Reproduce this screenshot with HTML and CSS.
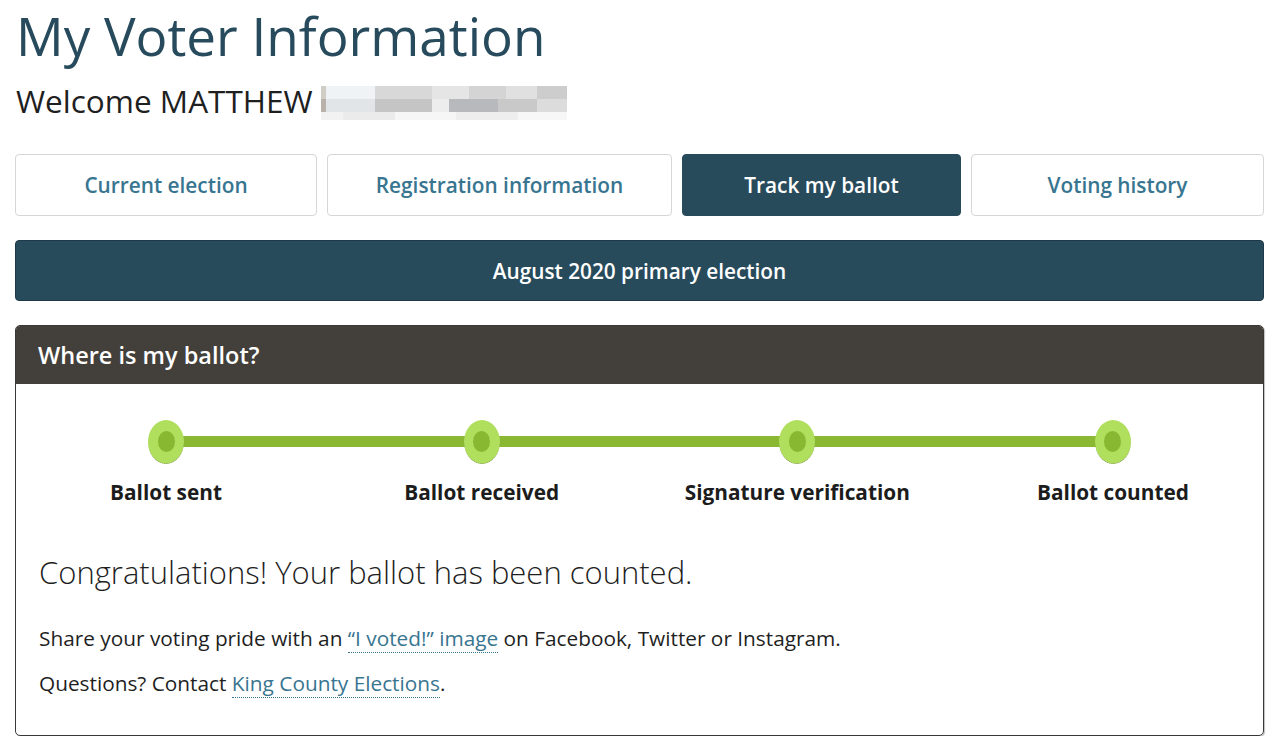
FILE: index.html
```html
<!DOCTYPE html>
<html lang="en">
<head>
<meta charset="utf-8">
<title>My Voter Information</title>
<link rel="stylesheet" href="styles.css">
</head>
<body>
<main class="page">
  <h1 class="title">My Voter Information</h1>
  <p class="welcome">Welcome MATTHEW <span class="redacted"></span></p>

  <nav class="tabs">
    <a class="tab" href="#">Current election</a>
    <a class="tab" href="#">Registration information</a>
    <a class="tab tab-active" href="#">Track my ballot</a>
    <a class="tab" href="#">Voting history</a>
  </nav>

  <div class="election">August 2020 primary election</div>

  <section class="panel">
    <h2 class="panel-head">Where is my ballot?</h2>
    <div class="panel-body">
      <ol class="steps">
        <li class="step"><span class="dot"></span><span class="step-label">Ballot sent</span></li>
        <li class="step"><span class="dot"></span><span class="step-label">Ballot received</span></li>
        <li class="step"><span class="dot"></span><span class="step-label">Signature verification</span></li>
        <li class="step"><span class="dot"></span><span class="step-label">Ballot counted</span></li>
      </ol>
      <p class="congrats">Congratulations! Your ballot has been counted.</p>
      <p class="text">Share your voting pride with an <a href="#" class="link">“I voted!” image</a> on Facebook, Twitter or Instagram.</p>
      <p class="text text-second">Questions? Contact <a href="#" class="link">King County Elections</a>.</p>
    </div>
  </section>
</main>
</body>
</html>
```

FILE: styles.css
```css
* { box-sizing: border-box; }
html, body { margin: 0; padding: 0; background: #fff; }
body {
  font-family: "Open Sans", "Noto Sans", sans-serif;
  color: #222;
}
.page {
  padding: 0 16px 0 15px;
}
.title {
  margin: 0;
  padding: 4px 0 0 1px;
  font-size: 53px;
  line-height: 64px;
  font-weight: 400;
  color: #274b5c;
}
.welcome {
  margin: 11px 0 0 1px;
  font-size: 31.5px;
  line-height: 44px;
  color: #1f1f1f;
  display: flex;
  align-items: center;
  gap: 8px;
}
.redacted {
  display: inline-block;
  width: 246px;
  height: 34px;
  margin-top: 4px;
  background:
    linear-gradient(90deg, #f2f2f2 0 9%, #ebebeb 9% 30%, #f6f6f6 30% 55%, #eeeeee 55% 80%, #f7f7f7 80% 100%) 0 26px / 100% 8px no-repeat,
    linear-gradient(90deg, #b9b2aa 0 2%, #e2e5e8 2% 22%, #c5c5c5 22% 45%, #ededed 45% 52%, #b8b9bd 52% 72%, #c9c9c9 72% 88%, #dcdcdc 88% 100%) 0 13px / 100% 13px no-repeat,
    linear-gradient(90deg, #d0ccc6 0 2%, #f0f3f5 2% 22%, #d8d8d8 22% 45%, #e5e5e5 45% 60%, #d4d4d4 60% 75%, #e0e0e0 75% 88%, #cdcdcd 88% 100%) 0 0 / 100% 13px no-repeat;
}
.tabs {
  margin-top: 31px;
  display: grid;
  grid-template-columns: 302fr 345fr 279fr 293fr;
  gap: 10px;
}
.tab {
  height: 62px;
  display: flex;
  align-items: center;
  justify-content: center;
  border: 1px solid #d6d6d6;
  border-radius: 4px;
  background: #fff;
  color: #387590;
  font-size: 20.8px;
  font-weight: 600;
  text-decoration: none;
}
.tab-active {
  background: #284b5c;
  border-color: #284b5c;
  color: #fff;
}
.election {
  margin-top: 24px;
  height: 61px;
  display: flex;
  align-items: center;
  justify-content: center;
  background: #284b5c;
  border: 1px solid #1e3a48;
  border-radius: 4px;
  color: #fff;
  font-size: 20.8px;
  font-weight: 600;
}
.panel {
  margin-top: 24px;
  border: 1px solid #3a3835;
  border-radius: 5px;
  box-shadow: 1px 1px 1px rgba(0,0,0,0.25);
  overflow: hidden;
}
.panel-head {
  margin: 0;
  height: 58px;
  display: flex;
  align-items: center;
  padding-left: 22px;
  background: #433f3a;
  color: #fff;
  font-size: 23.5px;
  font-weight: 600;
}
.panel-body {
  padding: 36px 35px 38px 23px;
}
.steps {
  list-style: none;
  margin: 0 0 0 12px;
  padding: 0;
  display: flex;
  justify-content: space-between;
  position: relative;
}
.steps::before {
  content: "";
  position: absolute;
  left: 115px;
  right: 115px;
  top: 16px;
  height: 11px;
  background: #8ab833;
}
.step {
  width: 230px;
  display: flex;
  flex-direction: column;
  align-items: center;
  position: relative;
}
.dot {
  width: 36px;
  height: 44px;
  border-radius: 50%;
  background: #b0de5d;
  border-bottom: 1px dotted #7a8a55;
  display: flex;
  align-items: center;
  justify-content: center;
}
.dot::after {
  content: "";
  width: 17px;
  height: 21px;
  border-radius: 50%;
  background: #88b832;
}
.step-label {
  margin-top: 14px;
  font-size: 20.8px;
  line-height: 28px;
  font-weight: 700;
  color: #1c1c1c;
  white-space: nowrap;
}
.congrats {
  margin: 45px 0 0;
  font-size: 31px;
  font-weight: 300;
  color: #1f1f1f;
  line-height: 42px;
}
.text {
  margin: 31px 0 0;
  font-size: 20.8px;
  line-height: 28px;
  color: #1f1f1f;
}
.text-second { margin-top: 17px; }
.link {
  color: #387590;
  text-decoration: none;
  border-bottom: 1px dotted #387590;
}
```
